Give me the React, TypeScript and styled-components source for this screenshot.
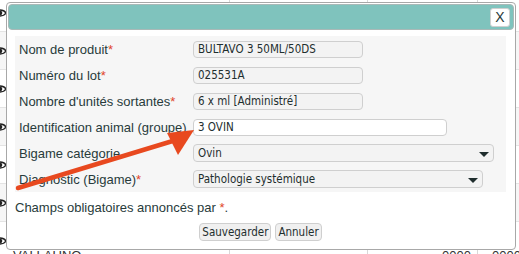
import React from "react";
import styled, { createGlobalStyle } from "styled-components";

const Global = createGlobalStyle`
  html, body { margin: 0; padding: 0; background: #ffffff; }
  body { font-family: "Liberation Sans", Arial, sans-serif; }
`;

const Page = styled.div`
  position: relative;
  width: 519px;
  height: 254px;
  overflow: hidden;
  background: #ffffff;
`;

const BgTable = styled.div`
  display: flex;
  flex-direction: column;
  margin-top: -6px;
`;

const BgRow = styled.div<{ $alt?: boolean }>`
  height: 38px;
  box-sizing: border-box;
  display: flex;
  align-items: stretch;
  border-bottom: 1px solid #e4e4e4;
  background: ${(p) => (p.$alt ? "#f6f6f6" : "#ffffff")};
`;

const EyeCell = styled.div`
  width: 14px;
  margin-left: -7px;
  display: flex;
  align-items: center;
  flex: none;
`;

const BgCell = styled.div<{ $w: number; $right?: boolean }>`
  width: ${(p) => p.$w}px;
  box-sizing: border-box;
  border-right: 1px solid #d8d8d8;
  font-family: "Liberation Sans", Arial, sans-serif;
  font-size: 13px;
  color: #333;
  padding: 26px 6px 0 6px;
  text-align: ${(p) => (p.$right ? "right" : "left")};
  flex: none;
`;

const Dialog = styled.div`
  position: absolute;
  left: 6px;
  top: 2px;
  width: 510px;
  height: 248px;
  box-sizing: border-box;
  background: #ffffff;
  border: 1px solid #a8a8a8;
  border-radius: 4px;
  padding: 1px;
  display: flex;
  flex-direction: column;
`;

const TitleBar = styled.div`
  height: 26px;
  box-sizing: border-box;
  background: #7fc3bd;
  border: 1px solid #a9b9b7;
  border-radius: 4px;
  display: flex;
  justify-content: flex-end;
  align-items: center;
  padding-right: 3px;
`;

const CloseButton = styled.button`
  width: 20px;
  height: 19px;
  box-sizing: border-box;
  background: #ffffff;
  border: 1px solid #d0d0d0;
  border-radius: 3px;
  padding: 0;
  font-family: "Liberation Sans", Arial, sans-serif;
  font-size: 14px;
  color: #2a3a3a;
  display: flex;
  align-items: center;
  justify-content: center;
`;

const Body = styled.div`
  padding: 6px 8px 0 7px;
  display: flex;
  flex-direction: column;
`;

const FormPanel = styled.div`
  background: #f6f6f6;
  width: 491px;
  display: flex;
  flex-direction: column;
`;

const Row = styled.div`
  height: 26px;
  display: flex;
  align-items: center;
`;

const Label = styled.div`
  width: 178px;
  box-sizing: border-box;
  padding-left: 4px;
  font-family: "Liberation Sans", Arial, sans-serif;
  font-size: 13px;
  color: #283b3b;
  white-space: nowrap;
  flex: none;
`;

const Star = styled.span`
  color: #e0442a;
`;

const Field = styled.div<{ $w: number; $white?: boolean; $h?: number }>`
  width: ${(p) => p.$w}px;
  height: ${(p) => p.$h ?? 17}px;
  box-sizing: border-box;
  border: 1px solid #cfcfcf;
  border-radius: 4px;
  background: ${(p) => (p.$white ? "#ffffff" : "#f3f3f3")};
  padding: 0 4px;
  font-family: "DejaVu Sans Condensed", "DejaVu Sans", sans-serif;
  font-size: 11.5px;
  color: #1e2e2e;
  display: flex;
  align-items: center;
  justify-content: space-between;
  flex: none;
`;

const Arrow = styled.svg`
  flex: none;
  margin-top: 2px;
`;

const Note = styled.div`
  margin-top: 8px;
  font-family: "Liberation Sans", Arial, sans-serif;
  font-size: 13px;
  line-height: 15px;
  color: #283b3b;
`;

const Buttons = styled.div`
  margin-top: 8px;
  display: flex;
  justify-content: center;
  gap: 4px;
`;

const Btn = styled.button`
  height: 18px;
  box-sizing: border-box;
  border: 1px solid #cfcfcf;
  border-radius: 4px;
  background: #f0f0f0;
  padding: 0 2px;
  font-family: "DejaVu Sans Condensed", "DejaVu Sans", sans-serif;
  font-size: 11.5px;
  color: #1e2e2e;
`;

const Annotation = styled.svg`
  position: absolute;
  left: 0;
  top: 0;
  pointer-events: none;
`;

const EyeIcon = () => (
  <svg width="14" height="10" viewBox="0 0 14 10">
    <path d="M1 5 C3.5 1 10.5 1 13 5 C10.5 9 3.5 9 1 5 Z" fill="none" stroke="#222" strokeWidth="1.4" />
    <circle cx="7" cy="5" r="2.3" fill="#222" />
  </svg>
);

const Tri = () => (
  <Arrow width="10" height="5" viewBox="0 0 10 5">
    <path d="M0 0 L10 0 L5 5 Z" fill="#1f2d2d" />
  </Arrow>
);

const bgRows: { alt: boolean; cells?: string[] }[] = [
  { alt: false },
  { alt: true },
  { alt: false },
  { alt: true },
  { alt: false },
  { alt: true },
  { alt: false, cells: ["VALLAUNO", "", "0000", "0000"] },
];
const cellWidths = [223, 138, 110, 50];

export default function App() {
  return (
    <Page>
      <Global />
      <BgTable>
        {bgRows.map((r, i) => (
          <BgRow key={i} $alt={r.alt}>
            <EyeCell>
              <EyeIcon />
            </EyeCell>
            {cellWidths.map((w, j) => (
              <BgCell key={j} $w={w} $right={j >= 2}>
                {r.cells ? r.cells[j] : ""}
              </BgCell>
            ))}
          </BgRow>
        ))}
      </BgTable>

      <Dialog>
        <TitleBar>
          <CloseButton>X</CloseButton>
        </TitleBar>
        <Body>
          <FormPanel>
            <Row>
              <Label>
                Nom de produit<Star>*</Star>
              </Label>
              <Field $w={170}>BULTAVO 3 50ML/50DS</Field>
            </Row>
            <Row>
              <Label>
                Numéro du lot<Star>*</Star>
              </Label>
              <Field $w={170}>025531A</Field>
            </Row>
            <Row>
              <Label>
                Nombre d'unités sortantes<Star>*</Star>
              </Label>
              <Field $w={170}>6 x ml [Administré]</Field>
            </Row>
            <Row>
              <Label>Identification animal (groupe)</Label>
              <Field $w={254} $white>
                3 OVIN
              </Field>
            </Row>
            <Row>
              <Label>Bigame catégorie</Label>
              <Field $w={301} $h={18}>
                <span>Ovin</span>
                <Tri />
              </Field>
            </Row>
            <Row>
              <Label>
                Diagnostic (Bigame)<Star>*</Star>
              </Label>
              <Field $w={290} $h={18}>
                <span>Pathologie systémique</span>
                <Tri />
              </Field>
            </Row>
          </FormPanel>
          <Note>
            Champs obligatoires annoncés par <Star>*</Star>.
          </Note>
          <Buttons>
            <Btn>Sauvegarder</Btn>
            <Btn>Annuler</Btn>
          </Buttons>
        </Body>
      </Dialog>

      <Annotation width="519" height="254" viewBox="0 0 519 254">
        <line x1="18" y1="188" x2="176" y2="140" stroke="#e8491f" strokeWidth="4.5" strokeLinecap="round" />
        <polygon points="194,130 167,133 178,155" fill="#e8491f" />
      </Annotation>
    </Page>
  );
}
